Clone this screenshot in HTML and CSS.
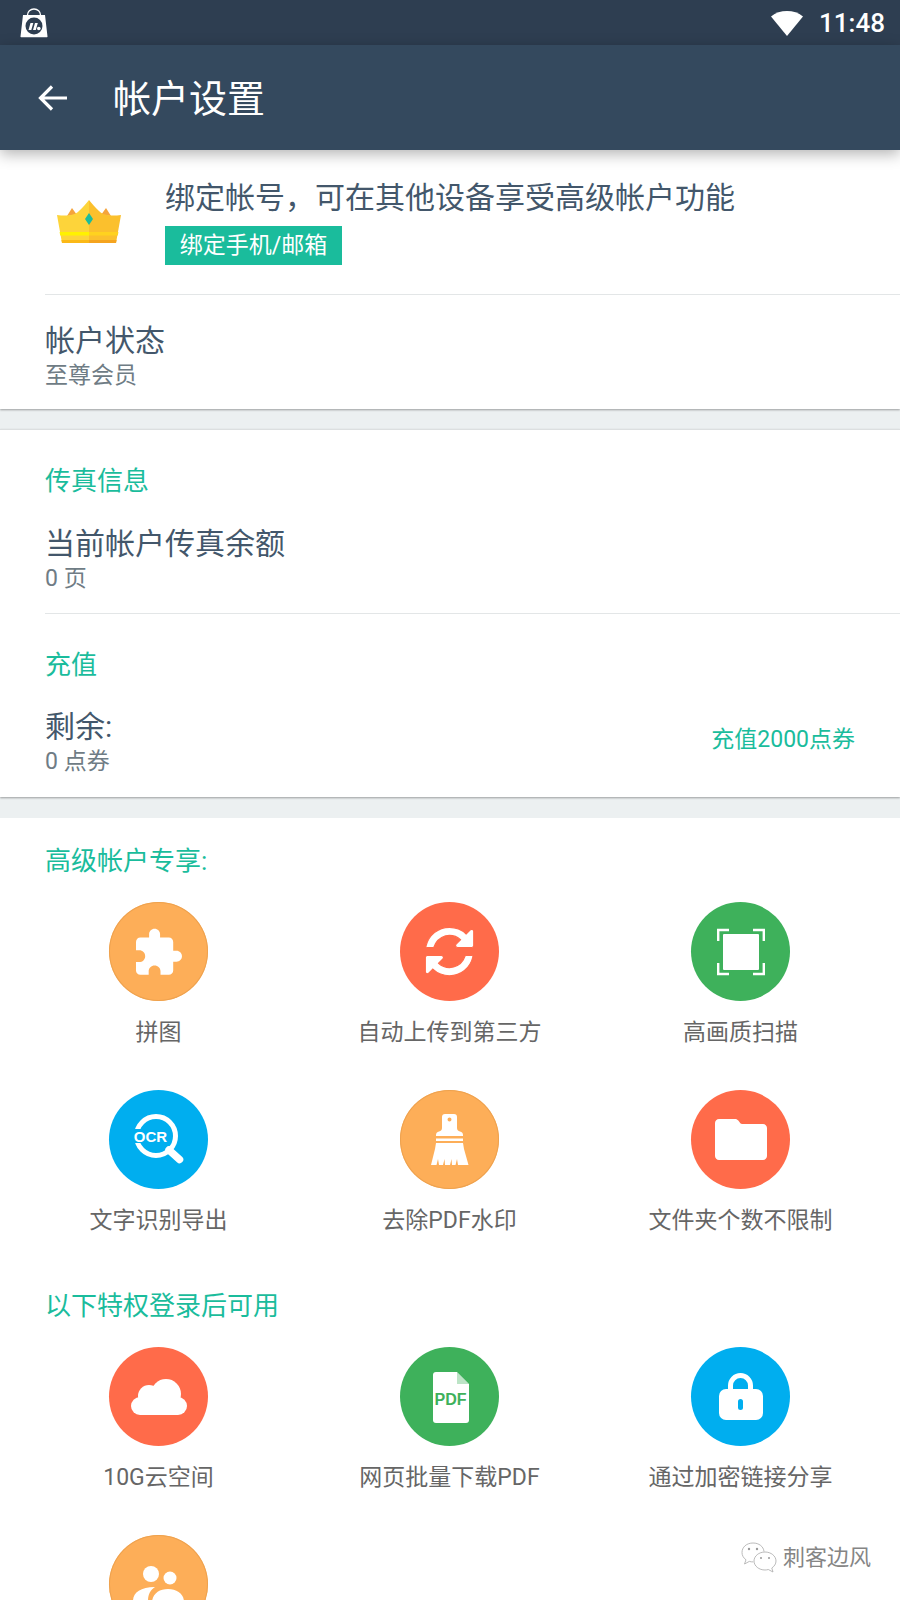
FILE: index.html
```html
<!DOCTYPE html>
<html lang="zh-CN">
<head>
  <meta charset="UTF-8" />
  <meta name="viewport" content="width=device-width, initial-scale=1.0"/>
  <title>帐户设置</title>
  <link rel="stylesheet" href="styles.css">
</head>
<body>
  <div class="page">
    <div class="status-bar">
      <svg class="bag-icon" width="32" height="30" viewBox="0 0 32 30">
        <path d="M9.500 9V7c0-3.500 2.800-6 6.500-6s6.500 2.500 6.500 6v2" fill="none" stroke="#fff" stroke-width="1.300"/>
        <path d="M5 7h22l2.500 21.500a.6.6 0 0 1-.6.7H3.100a.6.6 0 0 1-.6-.7z" fill="#fff"/>
        <circle cx="16" cy="18" r="8.500" fill="#2e3e51"/>
        <path d="M10.500 22l2-7h2.800l-2 7zM15 22l2-7h2.800l-2 7z" fill="#fff"/>
        <circle cx="20.800" cy="20.500" r="1.800" fill="#fff"/>
      </svg>
      <div class="status-right">
        <svg width="34" height="30" viewBox="0 0 34 30">
          <path d="M1 10.500C5.500 6.800 11 5 17 5s11.500 1.800 16 5.500L17 30z" transform="translate(0 -2)" fill="#fff"/>
        </svg>
        <span class="clock">11:48</span>
      </div>
    </div>

    <div class="toolbar">
      <svg class="back-icon" width="32" height="32" viewBox="0 0 32 32">
        <path d="M30 16H4M15 4.500L3.500 16 15 27.500" fill="none" stroke="#fff" stroke-width="3.200"/>
      </svg>
      <h1 class="toolbar-title">帐户设置</h1>
    </div>

    <div class="card">
      <div class="promo">
        <svg class="crown" width="68" height="46" viewBox="0 0 68 46">
          <path d="M12 17l5-8 5 7zM56 17l-5-8-5 7z" fill="#f5a43c"/>
          <path d="M2 16c9 1 17 1 22-4 4-4 7-7 10-11v43H7z" fill="#fdd43a"/>
          <path d="M66 16c-9 1-17 1-22-4-4-4-7-7-10-11v43h27z" fill="#fbc02d"/>
          <path d="M4.600 33H34v3.500H5.200z" fill="#fff200"/>
          <path d="M34 33h29.400l-.6 3.500H34z" fill="#ffd21f"/>
          <path d="M6.400 41H34v3H7z" fill="#fbb917"/>
          <path d="M34 41h27.600L61 44H34z" fill="#f5a41f"/>
          <path d="M34 14l4 6-4 6-4-6z" fill="#1abc9c"/>
        </svg>
        <div>
          <div class="title">绑定帐号，可在其他设备享受高级帐户功能</div>
          <div class="tag">绑定手机/邮箱</div>
        </div>
      </div>
      <div class="row row-status">
        <div class="title">帐户状态</div>
        <div class="sub">至尊会员</div>
      </div>
    </div>

    <div class="card card-fax">
      <div class="section-title">传真信息</div>
      <div class="fax-info">
        <div class="title">当前帐户传真余额</div>
        <div class="sub">0 页</div>
      </div>
      <div class="row row-recharge">
        <div class="section-title">充值</div>
        <div class="balance">
          <div>
            <div class="title">剩余:</div>
            <div class="sub">0 点券</div>
          </div>
          <span class="recharge-link">充值2000点券</span>
        </div>
      </div>
    </div>

    <div class="card card-premium">
      <div class="section-title">高级帐户专享:</div>
      <div class="feature-grid">
        <div class="feature">
          <div class="badge orange">
            <svg viewBox="0 0 99 99"><g transform="translate(22.600 24.600) scale(2.190)"><path fill="#fff" d="M20.500 11H19V7c0-1.100-.9-2-2-2h-4V3.500C13 2.120 11.880 1 10.500 1S8 2.120 8 3.500V5H4c-1.100 0-1.990.9-1.990 2v3.800H3.500c1.490 0 2.700 1.210 2.700 2.700s-1.210 2.700-2.700 2.700H2V20c0 1.100.9 2 2 2h3.800v-1.500c0-1.490 1.210-2.700 2.700-2.700 1.490 0 2.700 1.210 2.700 2.700V22H17c1.100 0 2-.9 2-2v-4h1.500c1.380 0 2.500-1.120 2.500-2.500S21.880 11 20.500 11z"/></g></svg>
          </div>
          <div class="feature-name">拼图</div>
        </div>
        <div class="feature">
          <div class="badge red">
            <svg viewBox="0 0 99 99"><g transform="translate(21.300 21.300) scale(.0315)"><path fill="#fff" stroke="#ff6b4a" stroke-width="36" d="M1639 1056q0 5-1 7-64 268-268 434.500t-478 166.500q-146 0-282.500-55t-243.500-157l-129 129q-19 19-45 19t-45-19-19-45v-448q0-26 19-45t45-19h448q26 0 45 19t19 45-19 45l-137 137q71 66 161 102t187 36q134 0 250-65t186-179q11-17 53-117 8-23 30-23h192q13 0 22.500 9.500t9.500 22.500zm25-800v448q0 26-19 45t-45 19h-448q-26 0-45-19t-19-45 19-45l138-138q-148-137-349-137-134 0-250 65t-186 179q-11 17-53 117-8 23-30 23h-199q-13 0-22.500-9.500t-9.500-22.500v-7q65-268 270-434.500t480-166.500q146 0 284 55.500t245 156.500l130-129q19-19 45-19t45 19 19 45z"/></g></svg>
          </div>
          <div class="feature-name">自动上传到第三方</div>
        </div>
        <div class="feature">
          <div class="badge green">
            <svg viewBox="0 0 99 99">
              <rect x="32" y="32" width="36" height="36" rx="1" fill="#fff"/>
              <path d="M38 28H27.200V39M62 28H72.800V39M38 72H27.200V61M62 72H72.800V61" fill="none" stroke="#fff" stroke-width="2.400"/>
            </svg>
          </div>
          <div class="feature-name">高画质扫描</div>
        </div>
        <div class="feature">
          <div class="badge blue">
            <svg viewBox="0 0 99 99">
              <circle cx="47" cy="46" r="19.500" fill="none" stroke="#fff" stroke-width="5"/>
              <rect x="20" y="39" width="38" height="14" fill="#00aeef"/>
              <path d="M60 60l10.500 9.500" stroke="#fff" stroke-width="7.500" stroke-linecap="round"/>
              <text class="ocr-text" x="41.500" y="51.500" text-anchor="middle">OCR</text>
            </svg>
          </div>
          <div class="feature-name">文字识别导出</div>
        </div>
        <div class="feature">
          <div class="badge orange">
            <svg viewBox="0 0 99 99">
              <path fill="#fff" fill-rule="evenodd" d="M45 24h9a3 3 0 0 1 3 3v11c0 2 1 3 3 3.500 2 .5 3 1.500 3 3.500v1H36v-1c0-2 1-3 3-3.500 2-.5 3-1.500 3-3.500V27a3 3 0 0 1 3-3zM49.500 27.500a2 2 0 1 0 0 4 2 2 0 0 0 0-4z"/>
              <rect x="36" y="48.500" width="27" height="2.500" fill="#fff"/>
              <path fill="#fff" d="M36 53h27l1 6 4.500 16H58l-1-6-1.500 6H52l-.5-6-1.500 6h-5l-.5-6-1.500 6h-4l-1-6-1.500 6H31l4-16z"/>
            </svg>
          </div>
          <div class="feature-name">去除PDF水印</div>
        </div>
        <div class="feature">
          <div class="badge red">
            <svg viewBox="0 0 99 99"><path fill="#fff" d="M28 29h16c1.500 0 2.500.6 3.300 1.600l1.700 2.100c.8 1 1.500 1.300 3 1.300h20c2.200 0 4 1.800 4 4v28c0 2.200-1.800 4-4 4H28c-2.200 0-4-1.800-4-4V33c0-2.200 1.800-4 4-4z"/></svg>
          </div>
          <div class="feature-name">文件夹个数不限制</div>
        </div>
      </div>

      <div class="section-title section-login">以下特权登录后可用</div>
      <div class="feature-grid">
        <div class="feature">
          <div class="badge red">
            <svg viewBox="0 0 99 99">
              <g fill="#fff">
                <circle cx="31" cy="59" r="9"/>
                <circle cx="40" cy="49" r="11"/>
                <circle cx="57" cy="47" r="15"/>
                <circle cx="69" cy="59" r="9"/>
                <rect x="31" y="50" width="38" height="18"/>
              </g>
            </svg>
          </div>
          <div class="feature-name">10G云空间</div>
        </div>
        <div class="feature">
          <div class="badge green">
            <svg viewBox="0 0 99 99">
              <path fill="#fff" d="M36 25h21l12 12v36a3 3 0 0 1-3 3H36a3 3 0 0 1-3-3V28a3 3 0 0 1 3-3z"/>
              <path fill="#3eb15b" d="M57 25v12h12z" opacity=".35"/>
              <text class="pdf-text" x="50.500" y="58" text-anchor="middle">PDF</text>
            </svg>
          </div>
          <div class="feature-name">网页批量下载PDF</div>
        </div>
        <div class="feature">
          <div class="badge blue">
            <svg viewBox="0 0 99 99">
              <path d="M39.500 44V38.500a10 10 0 0 1 20 0V44" fill="none" stroke="#fff" stroke-width="5"/>
              <rect x="28" y="42" width="44" height="31" rx="7" fill="#fff"/>
              <rect x="47" y="52" width="5" height="11" rx="2.500" fill="#00aeef"/>
            </svg>
          </div>
          <div class="feature-name">通过加密链接分享</div>
        </div>
        <div class="feature">
          <div class="badge orange">
            <svg viewBox="0 0 99 99">
              <g fill="#fff">
                <circle cx="42" cy="39" r="8"/>
                <circle cx="61" cy="43" r="6.500"/>
                <path d="M24 66c0-8 7-14 22-14-5 3-7 8-7 14v12H24z"/>
                <path d="M43 68c0-9 7-14 16-14s16 5 16 13v11H43z"/>
              </g>
            </svg>
          </div>
        </div>
      </div>
    </div>

    <div class="watermark">
      <svg width="38" height="34" viewBox="0 0 38 34">
        <path d="M13 2C6.500 2 2 6.200 2 11.500c0 3 1.500 5.500 4 7.300L4.500 23l4.800-2.600c1.300.4 2.500.5 4 .5" fill="#fff" stroke="#aaa" stroke-width=".8"/>
        <path d="M13 2c6 0 10.500 3.500 11 8.500" fill="none" stroke="#aaa" stroke-width=".8"/>
        <path d="M25 11c-6 0-11 4-11 9s5 9 11 9c1.200 0 2.300-.2 3.300-.5L33 31l-1.200-4c2.500-1.700 4.200-4 4.200-7 0-5-5-9-11-9z" fill="#fff" stroke="#aaa" stroke-width=".8"/>
        <circle cx="9" cy="8" r="1.200" fill="#999"/>
        <circle cx="17" cy="8" r="1.200" fill="#999"/>
        <circle cx="21" cy="17" r="1" fill="#999"/>
        <circle cx="29" cy="17" r="1" fill="#999"/>
      </svg>
      <span>刺客边风</span>
    </div>
  </div>
</body>
</html>
```

FILE: styles.css
```css
* {
  box-sizing: border-box;
}
body {
  margin: 0;
  font-family: Roboto, 'Noto Sans CJK SC', sans-serif;
  color: #43576b;
  background-color: #ecf0f1;
}
.page {
  position: relative;
  width: 900px;
  height: 1600px;
  overflow: hidden;
}
.status-bar {
  display: flex;
  align-items: center;
  justify-content: space-between;
  height: 45px;
  padding: 0 15px 0 18px;
  background-color: #2e3e51;
}
.status-right {
  display: flex;
  align-items: center;
  gap: 15px;
}
.clock {
  color: #fff;
  font-size: 26px;
  font-weight: 500;
}
.toolbar {
  position: relative;
  z-index: 2;
  display: flex;
  align-items: center;
  height: 105px;
  padding-left: 37px;
  background-color: #34495e;
  box-shadow: 0 4px 14px rgba(0,0,0,0.3);
}
.toolbar-title {
  margin: 3px 0 0 44px;
  color: #fff;
  font-size: 38px;
  font-weight: 400;
  line-height: 50px;
}
.card {
  background-color: #fff;
  box-shadow: 0 1px 2px rgba(0,0,0,0.35);
}
.promo {
  display: flex;
  height: 144px;
  padding: 28px 0 0 55px;
}
.crown {
  flex: none;
  margin: 21px 42px 0 0;
}
.title {
  font-size: 30px;
  line-height: 40px;
}
.sub {
  color: #6f7c85;
  font-size: 23px;
  line-height: 29px;
}
.tag {
  width: 177px;
  height: 39px;
  margin-top: 8px;
  background-color: #1abc9c;
  color: #fff;
  font-size: 23px;
  line-height: 40px;
  text-align: center;
}
.row {
  margin-left: 45px;
  border-top: 1px solid #e3e6e7;
}
.row-status {
  height: 115px;
  padding-top: 26px;
}
.card-fax {
  height: 368px;
  margin-top: 20px;
  padding-top: 33px;
  border-top: 1px solid #dcdfe0;
}
.section-title {
  padding-left: 45px;
  color: #1abc9c;
  font-size: 26px;
  line-height: 36px;
}
.fax-info {
  height: 114px;
  padding: 25px 0 0 45px;
}
.row-recharge {
  padding-top: 33px;
}
.row-recharge .section-title {
  padding-left: 0;
}
.balance {
  display: flex;
  align-items: center;
  justify-content: space-between;
  padding: 24px 45px 0 0;
}
.recharge-link {
  margin-bottom: 4px;
  color: #1abc9c;
  font-size: 23px;
  line-height: 30px;
}
.card-premium {
  margin-top: 21px;
  padding-top: 25px;
  box-shadow: none;
}
.feature-grid {
  display: grid;
  grid-template-columns: repeat(3, 291px);
  grid-auto-rows: 188px;
  margin-top: 23px;
  padding-left: 13px;
}
.section-login {
  margin-top: 10px;
}
.feature {
  display: flex;
  flex-direction: column;
  align-items: center;
}
.badge {
  flex: none;
  width: 99px;
  height: 99px;
  border-radius: 50%;
}
.badge svg {
  display: block;
  width: 99px;
  height: 99px;
}
.orange {
  background-color: #fdae58;
  box-shadow: inset 0 0 0 1px #eea24f;
}
.red {
  background-color: #ff6b4a;
}
.green {
  background-color: #3eb15b;
}
.blue {
  background-color: #00aeef;
}
.feature-name {
  margin-top: 17px;
  color: #666;
  font-size: 23px;
  line-height: 30px;
}
.ocr-text {
  fill: #fff;
  font-family: 'Liberation Sans', sans-serif;
  font-size: 15px;
  font-weight: 700;
}
.pdf-text {
  fill: #3eb15b;
  font-family: 'Liberation Sans', sans-serif;
  font-size: 16px;
  font-weight: 700;
}
.watermark {
  position: absolute;
  left: 740px;
  top: 1541px;
  display: flex;
  align-items: center;
  gap: 5px;
  color: #858585;
  font-size: 22px;
  line-height: 34px;
  text-shadow: 1px 1px 0 #fff;
}
```
